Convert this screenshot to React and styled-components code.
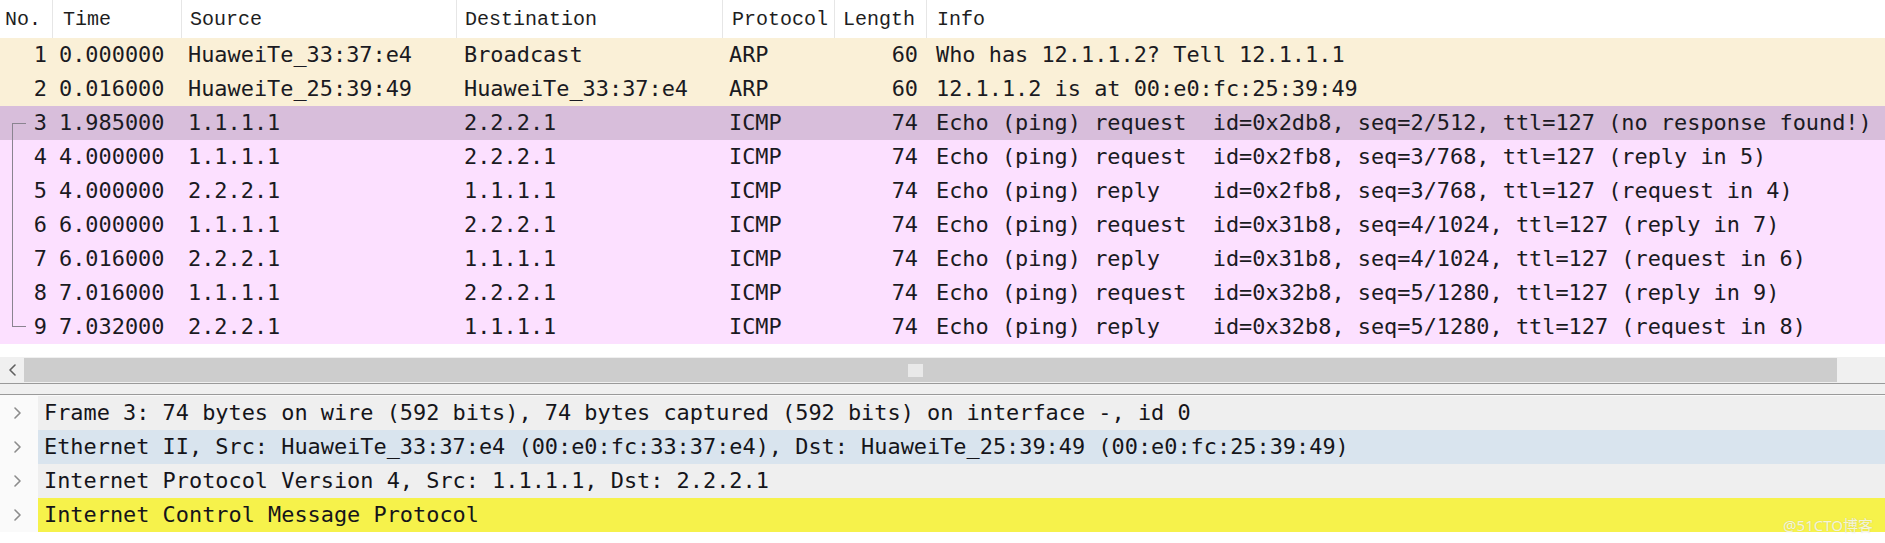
import styled, { createGlobalStyle } from "styled-components";

const GlobalStyle = createGlobalStyle`
  html, body {
    margin: 0;
    padding: 0;
    background: #ffffff;
    overflow: hidden;
  }
`

const columns = [
    { key: 'no', title: 'No.', width: '53px', align: 'right', pad: '0 6px 0 0', headPad: 5 },
    { key: 'time', title: 'Time', width: '129px', align: 'left', pad: '0 0 0 6px', headPad: 10 },
    { key: 'src', title: 'Source', width: '275px', align: 'left', pad: '0 0 0 6px', headPad: 8 },
    { key: 'dst', title: 'Destination', width: '266px', align: 'left', pad: '0 0 0 7px', headPad: 8 },
    { key: 'proto', title: 'Protocol', width: '112px', align: 'left', pad: '0 0 0 6px', headPad: 9 },
    { key: 'len', title: 'Length', width: '92px', align: 'right', pad: '0 9px 0 0', headPad: 8 },
    { key: 'info', title: 'Info', width: '1fr', align: 'left', pad: '0 0 0 9px', headPad: 10 },
];

const gridTemplate = columns.map(c => c.width).join(' ');

const rowColors = {
    arp: '#faf0d7',
    icmp: '#fce0ff',
    selected: '#d8bedb',
};

const packets = [
    { no: 1, time: '0.000000', src: 'HuaweiTe_33:37:e4', dst: 'Broadcast', proto: 'ARP', len: 60, info: 'Who has 12.1.1.2? Tell 12.1.1.1', kind: 'arp' },
    { no: 2, time: '0.016000', src: 'HuaweiTe_25:39:49', dst: 'HuaweiTe_33:37:e4', proto: 'ARP', len: 60, info: '12.1.1.2 is at 00:e0:fc:25:39:49', kind: 'arp' },
    { no: 3, time: '1.985000', src: '1.1.1.1', dst: '2.2.2.1', proto: 'ICMP', len: 74, info: 'Echo (ping) request  id=0x2db8, seq=2/512, ttl=127 (no response found!)', kind: 'selected', link: 'start' },
    { no: 4, time: '4.000000', src: '1.1.1.1', dst: '2.2.2.1', proto: 'ICMP', len: 74, info: 'Echo (ping) request  id=0x2fb8, seq=3/768, ttl=127 (reply in 5)', kind: 'icmp', link: 'mid' },
    { no: 5, time: '4.000000', src: '2.2.2.1', dst: '1.1.1.1', proto: 'ICMP', len: 74, info: 'Echo (ping) reply    id=0x2fb8, seq=3/768, ttl=127 (request in 4)', kind: 'icmp', link: 'mid' },
    { no: 6, time: '6.000000', src: '1.1.1.1', dst: '2.2.2.1', proto: 'ICMP', len: 74, info: 'Echo (ping) request  id=0x31b8, seq=4/1024, ttl=127 (reply in 7)', kind: 'icmp', link: 'mid' },
    { no: 7, time: '6.016000', src: '2.2.2.1', dst: '1.1.1.1', proto: 'ICMP', len: 74, info: 'Echo (ping) reply    id=0x31b8, seq=4/1024, ttl=127 (request in 6)', kind: 'icmp', link: 'mid' },
    { no: 8, time: '7.016000', src: '1.1.1.1', dst: '2.2.2.1', proto: 'ICMP', len: 74, info: 'Echo (ping) request  id=0x32b8, seq=5/1280, ttl=127 (reply in 9)', kind: 'icmp', link: 'mid' },
    { no: 9, time: '7.032000', src: '2.2.2.1', dst: '1.1.1.1', proto: 'ICMP', len: 74, info: 'Echo (ping) reply    id=0x32b8, seq=5/1280, ttl=127 (request in 8)', kind: 'icmp', link: 'end' },
];

const details = [
    { text: 'Frame 3: 74 bytes on wire (592 bits), 74 bytes captured (592 bits) on interface -, id 0', bg: '#efefef' },
    { text: 'Ethernet II, Src: HuaweiTe_33:37:e4 (00:e0:fc:33:37:e4), Dst: HuaweiTe_25:39:49 (00:e0:fc:25:39:49)', bg: '#d9e4ee' },
    { text: 'Internet Protocol Version 4, Src: 1.1.1.1, Dst: 2.2.2.1', bg: '#efefef' },
    { text: 'Internet Control Message Protocol', bg: '#f6f24b' },
];

const monoFont = `"DejaVu Sans Mono", "Liberation Mono", monospace`;

const Page = styled.div`
    position: relative;
    width: 1885px;
    height: 543px;
    background: #ffffff;
    overflow: hidden;
`

const PacketList = styled.div`
    background: #ffffff;
    padding-bottom: 13px;
`

const HeaderRow = styled.div`
    display: grid;
    grid-template-columns: ${gridTemplate};
    height: 38px;
    background: #ffffff;
`

const HeaderCell = styled.div`
    display: flex;
    align-items: center;
    padding-left: ${props => props.pad}px;
    border-right: ${props => props.last ? 'none' : '1px solid #e6e6e6'};
    font-family: "Liberation Mono", "DejaVu Sans Mono", monospace;
    font-size: 20px;
    color: #1e1e1e;
    white-space: pre;
`

const PacketRow = styled.div`
    display: grid;
    grid-template-columns: ${gridTemplate};
    height: 34px;
    background: ${props => rowColors[props.kind]};
`

const Cell = styled.div`
    position: relative;
    padding: ${props => props.pad};
    text-align: ${props => props.align};
    font-family: ${monoFont};
    font-size: 21.9px;
    line-height: 33px;
    color: #1a1a22;
    white-space: pre;
    overflow: hidden;
`

const Bracket = styled.span`
    position: absolute;
    left: 12px;
    width: 13px;
    top: ${props => props.kind === 'start' ? '17px' : '0'};
    bottom: ${props => props.kind === 'end' ? '17px' : '0'};
    border-left: 1.5px solid #8a8490;
    ${props => props.kind === 'start' && 'border-top: 1.5px solid #8a8490;'}
    ${props => props.kind === 'end' && 'border-bottom: 1.5px solid #8a8490;'}
`

const ScrollBar = styled.div`
    display: flex;
    align-items: stretch;
    height: 26px;
    background: #f0f0f0;
`

const ArrowBox = styled.div`
    width: 24px;
    display: flex;
    align-items: center;
    justify-content: center;
    flex-shrink: 0;
`

const Thumb = styled.div`
    flex: 1;
    margin: 1px 0;
    background: #cdcdcd;
    display: flex;
    align-items: center;
    justify-content: center;
`

const Grip = styled.div`
    width: 15px;
    height: 13px;
    background: #e9e9e9;
    margin-right: 30px;
`

const ScrollEnd = styled.div`
    width: 48px;
    flex-shrink: 0;
`

const Splitter = styled.div`
    height: 10px;
    background: #f0f0f0;
    border-top: 1px solid #9a9a9a;
    border-bottom: 1px solid #9a9a9a;
`

const DetailPane = styled.div`
    background: #fafafa;
    padding-top: 1px;
`

const DetailRow = styled.div`
    display: flex;
    height: 34px;
`

const Expander = styled.div`
    width: 38px;
    flex-shrink: 0;
    display: flex;
    align-items: center;
    padding-left: 13px;
    box-sizing: border-box;
`

const DetailLabel = styled.div`
    flex: 1;
    background: ${props => props.bg};
    padding-left: 6px;
    font-family: ${monoFont};
    font-size: 21.9px;
    line-height: 33px;
    color: #15151a;
    white-space: pre;
`

const Watermark = styled.div`
    position: absolute;
    right: 12px;
    bottom: 8px;
    font-family: "Noto Sans", "Noto Sans CJK SC", sans-serif;
    font-size: 15px;
    color: rgba(255, 255, 255, 0.8);
    text-shadow: 0 0 1px rgba(120, 120, 120, 0.35);
`

function Chevron({ dir, color }) {
    let d = dir === 'left' ? 'M7 1 L2 6 L7 11' : 'M2 1 L7 6 L2 11';
    return (
        <svg width="9" height="12" viewBox="0 0 9 12">
            <path d={d} fill="none" stroke={color} strokeWidth="1.6" strokeLinecap="round" strokeLinejoin="round" />
        </svg>
    )
}

function App() {
    return (
        <Page>
            <GlobalStyle />
            <PacketList>
                <HeaderRow>
                    {columns.map((c, i) => (
                        <HeaderCell key={c.key} pad={c.headPad} last={i === columns.length - 1}>{c.title}</HeaderCell>
                    ))}
                </HeaderRow>
                {packets.map(p => (
                    <PacketRow key={p.no} kind={p.kind}>
                        {columns.map(c => (
                            <Cell key={c.key} align={c.align} pad={c.pad}>
                                {c.key === 'no' && p.link ? <Bracket kind={p.link} /> : null}
                                {p[c.key]}
                            </Cell>
                        ))}
                    </PacketRow>
                ))}
            </PacketList>

            <ScrollBar>
                <ArrowBox><Chevron dir="left" color="#606060" /></ArrowBox>
                <Thumb><Grip /></Thumb>
                <ScrollEnd />
            </ScrollBar>
            <Splitter />

            <DetailPane>
                {details.map((d, i) => (
                    <DetailRow key={i}>
                        <Expander><Chevron dir="right" color="#8c8c8c" /></Expander>
                        <DetailLabel bg={d.bg}>{d.text}</DetailLabel>
                    </DetailRow>
                ))}
            </DetailPane>

            <Watermark>@51CTO博客</Watermark>
        </Page>
    )
}

export default App;
